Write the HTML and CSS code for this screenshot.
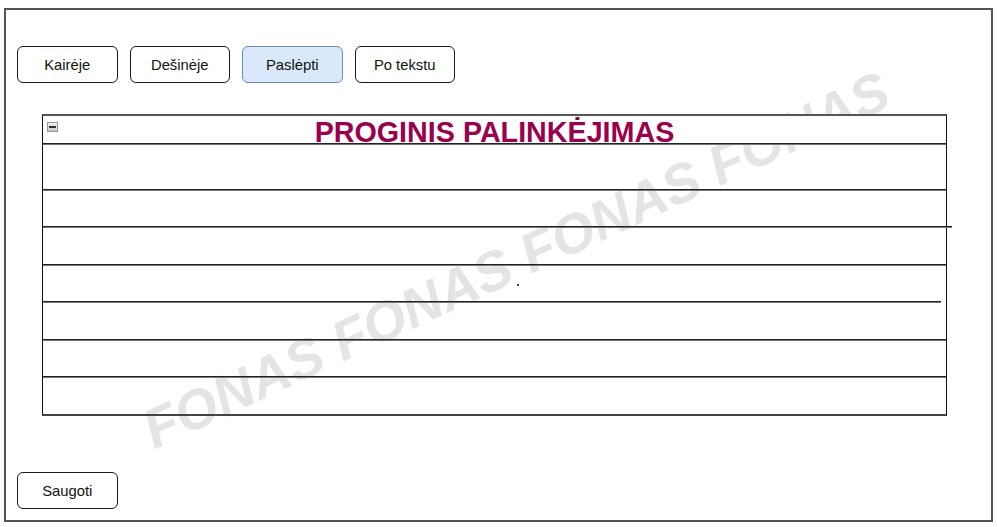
FILE: index.html
```
<!DOCTYPE html>
<html lang="lt">
<head>
<meta charset="utf-8">
<title>Proginis palinkėjimas</title>
<link rel="stylesheet" href="styles.css">
</head>
<body>
<div class="frame">
  <div class="watermark">FONAS FONAS FONAS FONAS</div>
  <div class="toolbar">
    <button class="btn">Kairėje</button>
    <button class="btn">Dešinėje</button>
    <button class="btn btn-active">Paslėpti</button>
    <button class="btn">Po tekstu</button>
  </div>
  <div class="sheet">
    <div class="sheet-head">
      <span class="collapse"><span class="collapse-bar"></span></span>
      <span class="title">PROGINIS PALINKĖJIMAS</span>
      <span></span>
    </div>
    <div class="rule"></div>
    <div class="row row-first"></div>
    <div class="rule"></div>
    <div class="row row-a"></div>
    <div class="rule rule-long"></div>
    <div class="row row-b"></div>
    <div class="rule"></div>
    <div class="row row-a row-dot"><span class="dot"></span></div>
    <div class="rule rule-short"></div>
    <div class="row row-b"></div>
    <div class="rule"></div>
    <div class="row row-a"></div>
    <div class="rule"></div>
    <div class="row row-b"></div>
  </div>
  <div class="footer">
    <button class="btn">Saugoti</button>
  </div>
</div>
</body>
</html>
```
FILE: styles.css
```
* { box-sizing: border-box; }
html, body { margin: 0; padding: 0; background: #fff; }
body { font-family: "Liberation Sans", Arial, sans-serif; }

.frame {
  position: relative;
  margin: 8px 0 0 4px;
  width: 989px;
  height: 514px;
  border: 2px solid #555;
  background: #fff;
  padding: 36px 0 0 11px;
  display: flex;
  flex-direction: column;
  overflow: hidden;
}

.watermark {
  position: absolute;
  left: 510px;
  top: 250px;
  transform: translate(-50%, -50%) rotate(-25deg);
  white-space: nowrap;
  font-family: "Liberation Sans", Arial, sans-serif;
  font-weight: bold;
  font-style: italic;
  font-size: 55px;
  color: #e4e4e4;
  z-index: 0;
}

.toolbar {
  display: flex;
  gap: 12px;
  position: relative;
  z-index: 1;
}

.btn {
  width: 100.5px;
  height: 37px;
  border: 1px solid #1a1a1a;
  border-radius: 6px;
  background: #fff;
  font-family: "Liberation Sans", Arial, sans-serif;
  font-size: 14.8px;
  color: #111;
  padding: 0;
  cursor: pointer;
}
.btn-active {
  background: #dae8fc;
  border-color: #6c8ebf;
}

.sheet {
  position: relative;
  z-index: 1;
  margin: 31px 0 0 25px;
  width: 905px;
  border-left: 1px solid #111;
  border-right: 1px solid #111;
  border-top: 2px solid #555;
  border-bottom: 2px solid #444;
  display: flex;
  flex-direction: column;
}

.sheet-head {
  height: 27px;
  background: #fff;
  display: grid;
  grid-template-columns: 1fr auto 1fr;
  align-items: start;
}

.collapse {
  justify-self: start;
  margin: 6px 0 0 4px;
  width: 11px;
  height: 10px;
  border: 1px solid #999;
  background: linear-gradient(#f4f4f4, #c8c8c8);
  display: flex;
  align-items: center;
  justify-content: center;
}
.collapse-bar {
  width: 7px;
  height: 2px;
  background: #333;
}

.title {
  font-family: "Liberation Sans", Arial, sans-serif;
  font-weight: bold;
  font-size: 28.7px;
  line-height: 28px;
  padding-top: 2px;
  color: #99004d;
  white-space: nowrap;
}

.rule {
  height: 2px;
  background: linear-gradient(#222 50%, #777 50%);
}
.rule-long { margin-right: -6px; }
.rule-short { margin-right: 5px; }

.row-first { height: 44px; }
.row-a { height: 35px; }
.row-b { height: 36px; }

.row-dot {
  display: flex;
  align-items: flex-start;
  padding: 18px 0 0 474px;
}
.dot {
  width: 2px;
  height: 2px;
  background: #444;
}

.footer {
  margin-top: auto;
  margin-bottom: 11px;
  position: relative;
  z-index: 1;
}
```
